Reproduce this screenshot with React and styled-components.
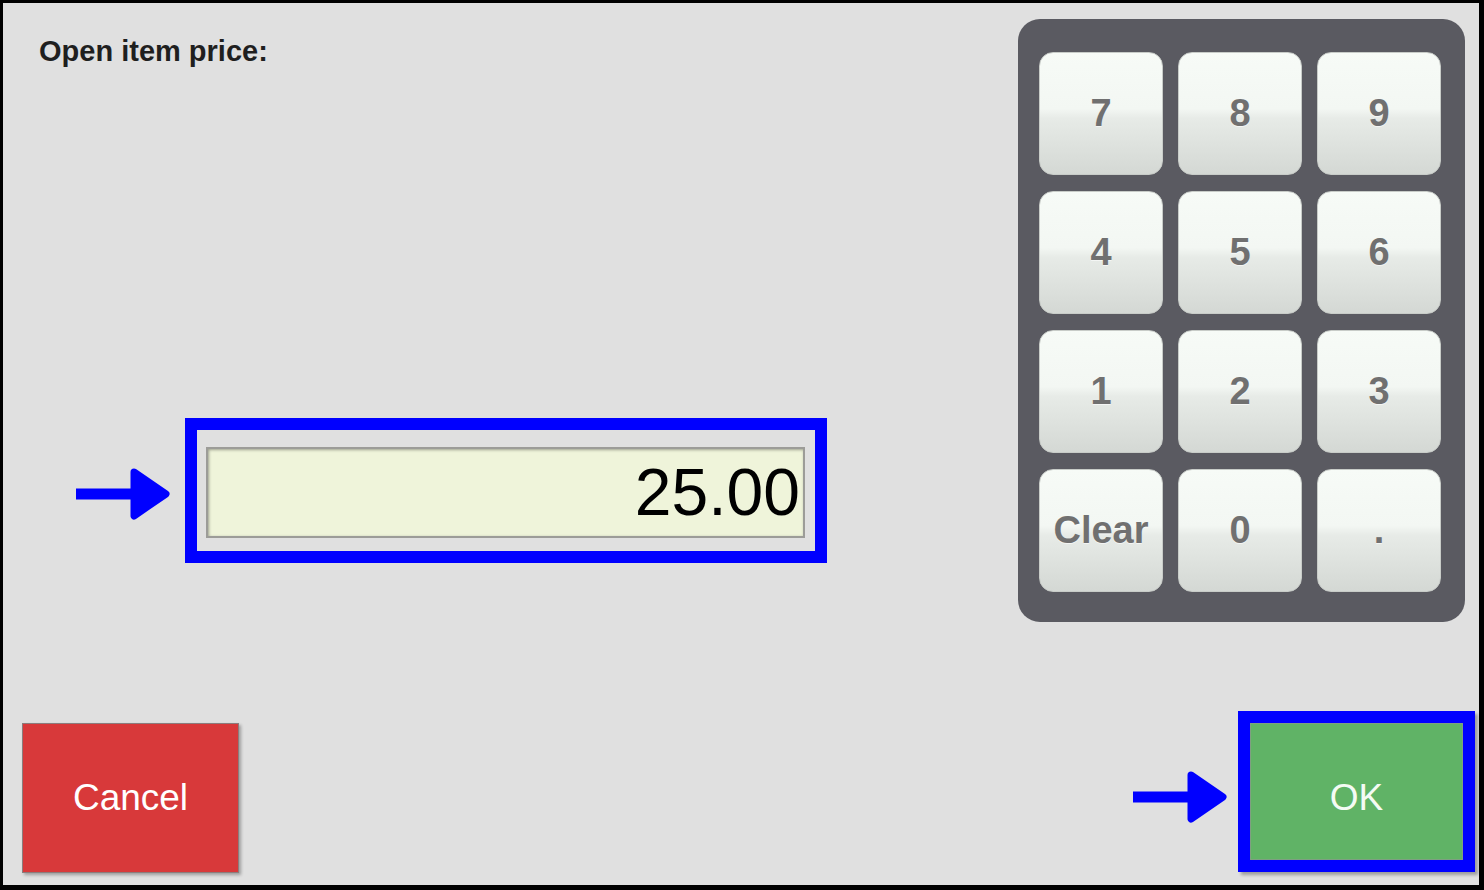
import React from 'react';
import styled, {createGlobalStyle} from "styled-components";

const GlobalStyle = createGlobalStyle`
  html, body {margin: 0; padding: 0; background: #000;}
  body {font-family: "Liberation Sans", Arial, sans-serif;}
`

const Frame = styled.div`
  width: 1484px;
  height: 890px;
  box-sizing: border-box;
  border-style: solid;
  border-color: #000;
  border-width: 3px 5px 5px 3px;
  background: #e0e0e0;
  display: flex;
  flex-direction: column;
`

const Main = styled.div`
  flex: 1;
  display: flex;
  align-items: flex-start;
`

const LeftPane = styled.div`
  flex: 1;
  display: flex;
  flex-direction: column;
`

const Label = styled.div`
  padding: 31px 0 0 36px;
  font-size: 29px;
  line-height: 34px;
  font-weight: bold;
  color: #1f1f1f;
`

const FieldRow = styled.div`
  display: flex;
  align-items: center;
  gap: 15px;
  margin: 350px 0 0 73px;
`

const Highlight = styled.div`
  border: 12px solid #0000ff;
  padding: ${p => p.$pad || '0'};
  box-shadow: ${p => p.$shadow ? '3px 3px 3px rgba(0,0,0,0.3)' : 'none'};
`

const Field = styled.div`
  width: 599px;
  height: 91px;
  box-sizing: border-box;
  background: #eff4da;
  border: 2px solid #9c9c98;
  box-shadow: inset 1px 1px 3px rgba(0,0,0,0.35);
  display: flex;
  align-items: center;
  justify-content: flex-end;
  padding: 0 3px 2px 0;
  font-size: 66px;
  color: #000;
`

const Keypad = styled.div`
  margin: 16px 14px 0 0;
  width: 447px;
  box-sizing: border-box;
  padding: 33px 22px 30px 21px;
  background: #5a5a61;
  border-radius: 22px;
  display: grid;
  grid-template-columns: repeat(3, 124px);
  grid-auto-rows: 123px;
  column-gap: 15px;
  row-gap: 16px;
`

const Key = styled.button`
  border: 1px solid #c8ccc8;
  border-radius: 14px;
  background: linear-gradient(to bottom, #f7fbf7 0%, #f3f7f3 46%, #e7ebe7 54%, #d4d8d4 100%);
  color: #707070;
  font-family: "Liberation Sans", Arial, sans-serif;
  font-size: 38px;
  font-weight: bold;
  padding: 0;
  display: flex;
  align-items: center;
  justify-content: center;
  text-shadow: 0 1px 0 rgba(255,255,255,0.6);
`

const Footer = styled.div`
  height: 174px;
  box-sizing: border-box;
  display: flex;
  justify-content: space-between;
  align-items: flex-end;
  padding: 0 4px 12px 19px;
`

const ActionButton = styled.button`
  width: ${p => p.$w}px;
  height: ${p => p.$h}px;
  background: ${p => p.$bg};
  border: 1px solid ${p => p.$edge};
  box-shadow: ${p => p.$raised ? '2px 2px 3px rgba(0,0,0,0.3)' : 'none'};
  color: ${p => p.$fg};
  font-family: "Liberation Sans", Arial, sans-serif;
  font-size: 37px;
  padding: ${p => p.$drop || 0}px 0 0 0;
  display: block;
`

const OkGroup = styled.div`
  display: flex;
  align-items: center;
  gap: 11px;
  margin-bottom: 1px;
`

const ArrowBox = styled.svg`
  display: block;
  margin-top: ${p => p.$shift || 0}px;
`

const Arrow = ({shift}) => (
  <ArrowBox $shift={shift} width="94" height="52" viewBox="0 0 94 52">
    <rect x="0" y="20.5" width="62" height="11" fill="#0000ff"/>
    <path d="M58 4 L90 26 L58 48 Z" fill="#0000ff" stroke="#0000ff" strokeWidth="7" strokeLinejoin="round"/>
  </ArrowBox>
);

const keys = ['7', '8', '9', '4', '5', '6', '1', '2', '3', 'Clear', '0', '.'];

const App = () => {
  return (<>
    <GlobalStyle/>
    <Frame>
      <Main>
        <LeftPane>
          <Label>Open item price:</Label>
          <FieldRow>
            <Arrow shift={6}/>
            <Highlight $pad="17px 10px 13px 9px">
              <Field>25.00</Field>
            </Highlight>
          </FieldRow>
        </LeftPane>
        <Keypad>
          {keys.map(k => <Key key={k}>{k}</Key>)}
        </Keypad>
      </Main>
      <Footer>
        <ActionButton $w={217} $h={150} $bg="#d8393a" $edge="#8c7c7c" $fg="#fff" $raised>Cancel</ActionButton>
        <OkGroup>
          <Arrow shift={10}/>
          <Highlight $shadow>
            <ActionButton $w={213} $h={137} $drop={12} $bg="#60b366" $edge="#7f9f82" $fg="#f4fbf4">OK</ActionButton>
          </Highlight>
        </OkGroup>
      </Footer>
    </Frame>
  </>);
};

export default App;
